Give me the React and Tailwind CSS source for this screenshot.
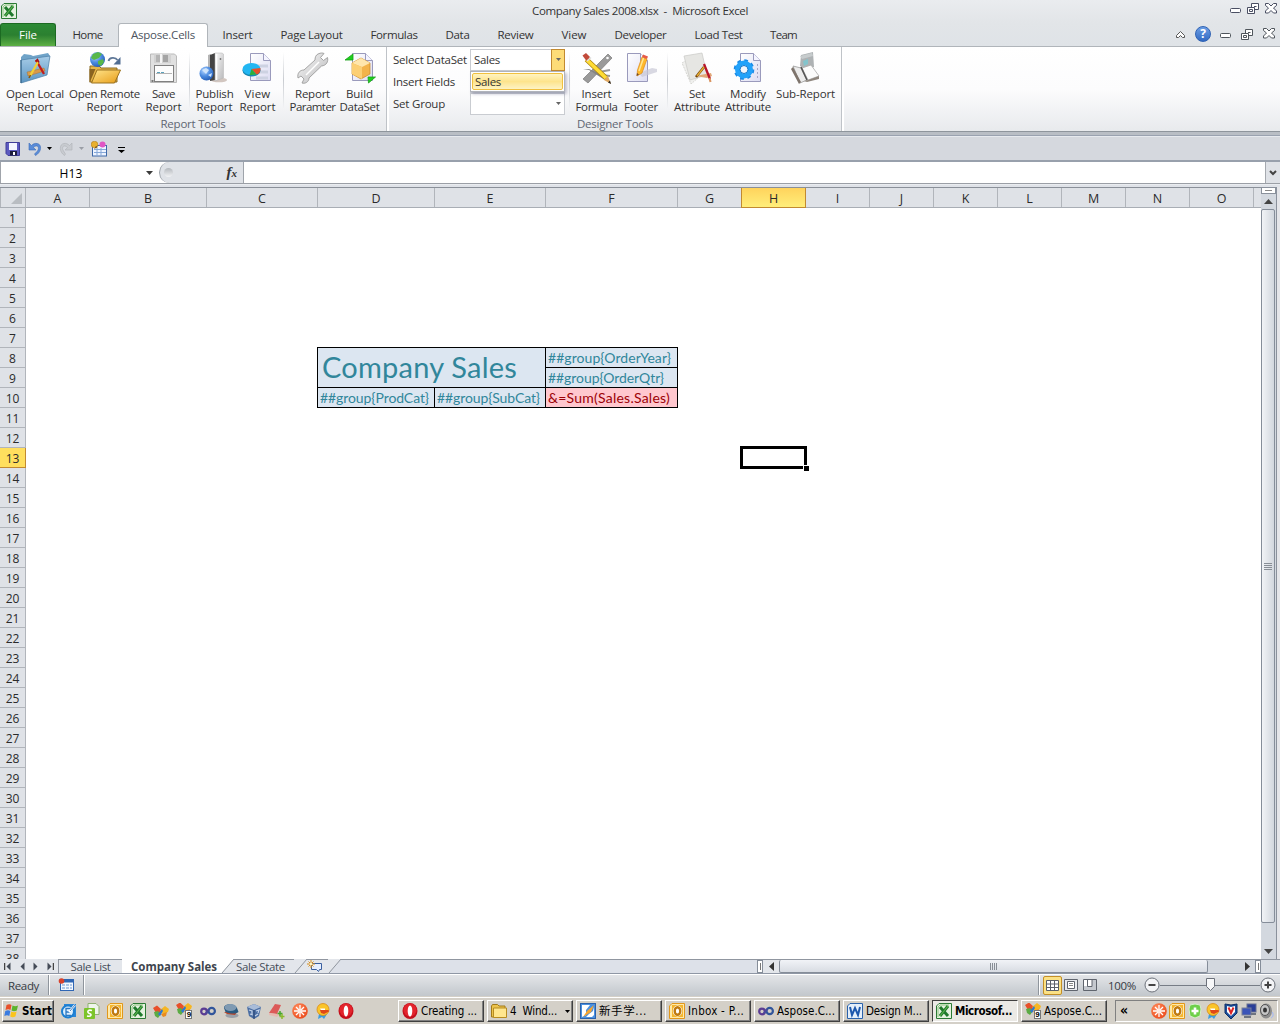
import React, { useLayoutEffect, useRef, useState } from "react";

/* Single-line text whose tracking is adjusted so that it fills w pixels. */
function T({ w, className = "", children }) {
  const ref = useRef(null);
  const [ls, setLs] = useState(null);
  useLayoutEffect(() => {
    if (!w || ls !== null) return;
    const natural = ref.current.getBoundingClientRect().width;
    setLs((w - natural) / String(children).length);
  }, [w, ls, children]);
  return (
    <span ref={ref} className={`inline-block whitespace-pre ${className}`} style={ls === null ? undefined : { letterSpacing: `${ls}px` }}>
      {children}
    </span>
  );
}

const Svg = ({ s = 16, children, className = "" }) => (
  <svg width={s} height={s} viewBox={`0 0 ${s} ${s}`} className={`block shrink-0 ${className}`}>{children}</svg>
);

/* ---------- shared gradients ---------- */
const Defs = () => (
  <svg width="0" height="0" className="absolute">
    <defs>
      <linearGradient id="blueF" x1="0" y1="0" x2="0" y2="1"><stop offset="0" stopColor="#a8cde8" /><stop offset="1" stopColor="#5b95c2" /></linearGradient>
      <linearGradient id="yel" x1="0" y1="0" x2="1" y2="1"><stop offset="0" stopColor="#ffe58c" /><stop offset="1" stopColor="#e89d18" /></linearGradient>
      <linearGradient id="gry" x1="0" y1="0" x2="1" y2="1"><stop offset="0" stopColor="#fafafa" /><stop offset="1" stopColor="#b8b8ba" /></linearGradient>
      <linearGradient id="page" x1="0" y1="0" x2="1" y2="1"><stop offset="0" stopColor="#ffffff" /><stop offset="1" stopColor="#dcdcf2" /></linearGradient>
      <radialGradient id="globe" cx="0.35" cy="0.3" r="0.8"><stop offset="0" stopColor="#b5d6ff" /><stop offset="0.5" stopColor="#4c8be0" /><stop offset="1" stopColor="#1f56ae" /></radialGradient>
      <radialGradient id="redg" cx="0.35" cy="0.3" r="0.8"><stop offset="0" stopColor="#ff8a5a" /><stop offset="1" stopColor="#ea4a1c" /></radialGradient>
    </defs>
  </svg>
);

/* ---------- ribbon icons, 32px ---------- */
const Page = ({ x = 8, y = 2, w = 20, h = 27 }) => (
  <g>
    <path d={`M${x} ${y}h${w - 7}l7 7v${h - 7}h-${w}z`} fill="url(#page)" stroke="#9a9abc" />
    <path d={`M${x + w - 7} ${y}v7h7`} fill="#f4f4ff" stroke="#9a9abc" />
  </g>
);

const LocalFolder = () => (
  <Svg s={32}>
    <path d="M2 5l3-3 7 1 2 1 15-3 2 3-1 4H2z" fill="#6fa3c8" />
    <path d="M2 8l29-4-3 19L2 31z" fill="url(#blueF)" stroke="#4a7ea6" strokeWidth="0.7" />
    <path d="M2 8v23" stroke="#35658a" strokeWidth="1.2" />
    <path d="M8 20l17-4 1 3-17 5z" fill="#d99a4a" stroke="#a06a28" strokeWidth="0.4" />
    <path d="M17 8l8 14" stroke="#c21c1c" strokeWidth="2.3" />
    <path d="M19 10l-8 14" stroke="#f2cf38" strokeWidth="2.3" />
    <path d="M16.500 9.500l2-2 1.500 3" stroke="#a11" strokeWidth="1.500" fill="none" />
    <path d="M11.500 23l-1.500 3" stroke="#8a560e" strokeWidth="1.500" />
  </Svg>
);
const RemoteFolder = () => (
  <Svg s={32}>
    <path d="M1 14h9l2 2h16v14H1z" fill="#e6b648" stroke="#8a6a24" />
    <path d="M0.500 31V17h6z" fill="#8a6420" />
    <path d="M8 18h23.500l-6 13H2.500z" fill="url(#yel)" stroke="#9a7220" />
    <circle cx="8.500" cy="7.500" r="7.500" fill="url(#globe)" />
    <path d="M4 2l5-2 4 2-3 4-5 2-3-2zM9 9l5-2 1 3-3 4-3-2z" fill="#58b84a" />
    <path d="M19.500 9c1-4 7-4 9-1" stroke="#5f7898" strokeWidth="1.800" fill="none" />
    <path d="M31.500 5v7.500h-7z" fill="#506d92" />
  </Svg>
);
const Floppy = () => (
  <Svg s={32}>
    <path d="M2.500 2h24l2 2v26.500h-26z" fill="#e0e0e0" stroke="#bababa" />
    <rect x="6" y="2" width="17" height="9" fill="#d2d2d2" />
    <rect x="8" y="3" width="4" height="7" fill="#b4b4b4" /><rect x="15" y="3" width="5" height="7" fill="#a4a4a4" /><rect x="12" y="2" width="2" height="9" fill="#f4f4f4" />
    <rect x="6.500" y="13.500" width="19" height="16" fill="#fcfcfc" stroke="#808080" />
    <path d="M9 20.500h8" stroke="#5aa0ba" strokeDasharray="3 1" /><path d="M8 21.500h16" stroke="#b4b4b4" />
    <rect x="3.500" y="28" width="2" height="2" fill="#777" />
  </Svg>
);
const Publish = () => (
  <Svg s={32}>
    <ellipse cx="20" cy="28" rx="8" ry="2.300" fill="#d2c6c0" />
    <path d="M9 3l3-1v25l-3 1z" fill="#b4b4b4" /><path d="M11 3l5-2v27l-5 1z" fill="#444" />
    <path d="M16 1h7l1.500 1v24l-8.500 3z" fill="url(#gry)" stroke="#b4b4b4" strokeWidth="0.500" /><path d="M17.500 2v26" stroke="#fff" strokeWidth="1.500" />
    <circle cx="21.500" cy="7" r="0.900" fill="#777" />
    <circle cx="7.500" cy="21.500" r="7" fill="url(#globe)" />
    <path d="M3 18l4-2 3 2-3 4zM9 23l4-2-1 4z" fill="#cfe4fb" />
  </Svg>
);
const ViewReport = () => (
  <Svg s={32}>
    <Page x={8.5} y={1.5} />
    <path d="M14 14h12M14 20h12M14 26h12" stroke="#cdd2e2" strokeWidth="3" />
    <ellipse cx="9.500" cy="18.500" rx="9" ry="6" fill="#1786b4" /><ellipse cx="9.500" cy="17" rx="9" ry="6" fill="#22b6f2" />
    <path d="M9.500 17l9-1c0 5-2 6-4 6.500z" fill="#e8502a" /><path d="M9.500 17l5 5.500-7 .8z" fill="#2fae3a" />
  </Svg>
);
const Wrench = () => (
  <Svg s={32}>
    <path d="M21 2c3-1.500 5-1 6-.5l-3.500 4 3 3 4-3c1 4-1 8-6 8.500L12 26c0 4-4 6-7 5l2-4-3-3-3 2c-1-5 2-8 6-8L18 8c0-3 1-5 3-6z" fill="url(#gry)" stroke="#9c9c9c" strokeWidth="0.900" />
    <path d="M22 10L9 23" stroke="#fff" strokeWidth="1.500" />
  </Svg>
);
const BuildDataset = () => (
  <Svg s={32}>
    <Page x={8.5} y={1.5} />
    <path d="M17 6l9 5v11l-9 5-9-5V11z" fill="#f3b34a" stroke="#c98a22" strokeWidth="0.700" />
    <path d="M17 6l9 5-8 4-10-4z" fill="#ffe6ac" /><path d="M8 11l10 4v12l-10-5z" fill="#fccf74" />
    <path d="M1 8l8-6v6z" fill="#1fd01f" stroke="#18a018" strokeWidth="0.800" /><path d="M24 25h7.500l-7 6z" fill="#1fd01f" stroke="#18a018" strokeWidth="0.800" />
  </Svg>
);
const InsertFormula = () => (
  <Svg s={32}>
    <path d="M27 2l4 4L7 31l-5-4z" fill="#9a9a9a" stroke="#7a7a7a" strokeWidth="0.700" />
    <path d="M2 17l6 1 16 10 5 2-5-6L8 17z" fill="#858585" /><path d="M18 20l11-2M20 23l9 1" stroke="#999" strokeWidth="2" />
    <circle cx="26.500" cy="6" r="1.300" fill="#fff" />
    <path d="M5.500 7.500L25 26" stroke="#a88010" strokeWidth="5" /><path d="M5.500 7.500L25 26" stroke="#ffdc34" strokeWidth="3.600" />
    <path d="M1.500 3.500L5 1l4 4-3.500 4z" fill="#c24a3a" /><path d="M6 9l4-3.500" stroke="#ddd" strokeWidth="1.500" />
    <path d="M23 28l4-4 3 8z" fill="#e0a860" /><path d="M30 32l-3-1.500 2-2z" fill="#222" />
  </Svg>
);
const SetFooter = () => (
  <Svg s={32}>
    <Page x={2.5} y={1.5} w={20} h={28} />
    <path d="M14 21l13-5 5 1v3l-15 5z" fill="#c8c8d6" opacity="0.700" />
    <path d="M17 5l5 2-5 14-5 3 .5-6z" fill="#ffb82c" stroke="#dc8a18" strokeWidth="0.700" /><path d="M18.500 6l-4.500 13" stroke="#ffe694" strokeWidth="1.500" />
    <path d="M17 5l1-2.500 5 2L22 7z" fill="#e65a48" /><path d="M11.500 24l.5-3 2 1.500z" fill="#6a4a30" />
  </Svg>
);
const SetAttribute = () => (
  <Svg s={32}>
    <path d="M1 11l8-5 8 20-7 6z" fill="#f0f0ee" stroke="#c8c8c4" strokeWidth="0.700" strokeDasharray="2 1" />
    <path d="M3 4l18-3 5 22-17 5z" fill="#e6e6e3" stroke="#c9c9c5" strokeWidth="0.700" />
    <path d="M14 24l16-3 1 3-5 2z" fill="#e2a878" /><path d="M23 12l6 15" stroke="#b8152a" strokeWidth="2.300" />
    <path d="M23 15l-8 10" stroke="#75430c" strokeWidth="2.600" /><path d="M23 15l-7 9" stroke="#e8b030" strokeWidth="1.300" />
    <path d="M28.500 26l1 4" stroke="#d9935e" strokeWidth="2" />
  </Svg>
);
const ModifyAttribute = () => (
  <Svg s={32}>
    <Page x={8.5} y={1.5} w={20} h={28} /><path d="M25.500 12v16" stroke="#a6a6c4" strokeDasharray="2 2" />
    <circle cx="12" cy="17.500" r="8.500" fill="none" stroke="#1a8ae6" strokeWidth="3.600" strokeDasharray="3.400 3.276" />
    <circle cx="12" cy="17.500" r="6.500" fill="none" stroke="#22a2fa" strokeWidth="5" />
    <circle cx="12" cy="17.500" r="4" fill="#f4f6fc" stroke="#0b74ca" />
  </Svg>
);
const SubReport = () => (
  <Svg s={32}>
    <path d="M11 3l12-3 1 15-9 2-5-3z" fill="#aeb2b4" /><path d="M10 4l12-3 1 3-11 3z" fill="#c7cccd" /><path d="M13 9l5-2v5l-4 2z" fill="#84c4cc" />
    <path d="M3 14l8 2 6 12-7 3z" fill="#ececec" stroke="#9a9a9a" strokeWidth="0.800" /><path d="M12 16l9-3 8 11-11 4z" fill="#fbfbfb" stroke="#aaa" strokeWidth="0.800" />
    <path d="M1 17l2-2 8 15-2 2z" fill="#7e746c" /><path d="M14 29l4-1 11-4v3l-12 3z" fill="#8e867e" /><path d="M11 15l6 13" stroke="#555" strokeWidth="1.600" />
  </Svg>
);

/* ---------- small icons ---------- */
const ExcelIcon = () => (
  <Svg><path d="M3 .5h12.500v15H.5V3z" fill="#e5f2df" stroke="#2b7a34" /><path d="M2 14V4l2-2h9" stroke="#8fc483" fill="none" />
    <path d="M4 4l8 9M12 3L4 13" stroke="#1f7a2c" strokeWidth="3" /><path d="M12 3L4 13" stroke="#5cb44c" strokeWidth="1.200" /></Svg>
);
const OperaIcon = () => (<Svg><ellipse cx="8" cy="8" rx="7.500" ry="8" fill="#c4101c" /><ellipse cx="8" cy="7" rx="6.500" ry="6.500" fill="#e3242c" /><ellipse cx="8" cy="8" rx="2.300" ry="5.500" fill="#fff" /></Svg>);
const OutlookIcon = () => (<Svg><path d="M3 .5h12.500v15H.5V3z" fill="#ffe9a8" stroke="#e2971a" /><rect x="3" y="2" width="11" height="12" fill="#f5b52c" /><ellipse cx="8.500" cy="8" rx="3.200" ry="4" fill="#fff" stroke="#fff" strokeWidth="3" /><ellipse cx="8.500" cy="8" rx="2.800" ry="3.800" fill="#fff" stroke="#c07a10" strokeWidth="2.400" /></Svg>);
const FolderIcon = () => (<Svg><path d="M.5 3l1-1.500h5L8 3h6v11H.5z" fill="#ecc34c" stroke="#a27a18" /><path d="M2.500 5h13v9.500h-13z" fill="#ffe68e" stroke="#b88c20" /></Svg>);
const NoteIcon = () => (<Svg><rect x=".5" y=".5" width="15" height="15" fill="#4a90e0" stroke="#2a62ac" /><path d="M2 2h8L6 7v5l-4 2z" fill="#fff" /><path d="M14 4v8l-2 2H6l3-3 4-3z" fill="#fff" /><path d="M3 14l4-6 7-6-3 7z" fill="#f7a52e" /></Svg>);
const VsIcon = () => (<Svg><circle cx="4" cy="8.500" r="2.800" fill="none" stroke="#5b3c93" strokeWidth="2.200" /><circle cx="11.700" cy="8" r="3.200" fill="none" stroke="#31559b" strokeWidth="2.200" /><path d="M6 10.500L9 6" stroke="#49499a" strokeWidth="2.200" /></Svg>);
const WordIcon = () => (<Svg><path d="M3 .5h12.500v15H.5V3z" fill="#e4effb" stroke="#2a62ac" /><path d="M3 4l2 8 3-7 3 7 2-8" fill="none" stroke="#1c57ad" strokeWidth="2" /></Svg>);
const Butterfly = () => (<g><path d="M0 5l4-2.500L9 7l-3 4-3-1z" fill="#e8502a" /><path d="M1 9l4-1 3 3-3 4-3-2z" fill="#5cab44" /><path d="M7 7l5-4 4 3-1 3-5 2z" fill="#f6b622" /><path d="M8 11l6-2-1 4-3 1z" fill="#e88c22" /><path d="M5 11l4-5 1 2-3 5z" fill="#2f78d0" /></g>);
const ButterflyIcon = () => <Svg><Butterfly /></Svg>;
const Butterfly9 = () => (
  <span className="relative block h-4 w-4 shrink-0"><Svg><g transform="translate(0 -3)"><Butterfly /></g></Svg>
    <span className="absolute right-0 bottom-0 h-[9px] w-[7px] border border-[#777] bg-white text-center font-['Liberation_Sans'] text-[8px] leading-[8px] font-bold text-black">9</span></span>
);
const OutlookExp = () => (<Svg><path d="M3 1h12v13H3z" fill="#2b86d8" /><circle cx="7" cy="8.500" r="6" fill="#dcefff" stroke="#1c7fd2" strokeWidth="2" /><path d="M10 5.500H5v7h5M5 9h4" stroke="#2b78c2" strokeWidth="1.300" fill="none" /><path d="M14 2L8 9" stroke="#fff" strokeWidth="2" /><path d="M14 2L9 8" stroke="#1560b0" strokeWidth="0.800" /></Svg>);
const SIcon = () => (<Svg><path d="M4 .5h8l3 3v8H4z" fill="#eef4ea" stroke="#8fb070" /><rect x="0" y="5" width="11" height="11" rx="1" fill="#7cc42a" /><path d="M8 7.500c-5-1.500-5 2.500-2.500 3s2 3.500-2.500 2.500" stroke="#fff" strokeWidth="1.600" fill="none" /></Svg>);
const StackIcon = () => (<Svg><ellipse cx="9" cy="12.500" rx="6.500" ry="2.500" fill="#9aa0a8" /><path d="M1 9l13 0-2 3-8-1z" fill="#b8462a" /><path d="M1 5c0-5 11-5 13 0l1.500 4c-3 2-7 2-13 0z" fill="#2a5a80" /><ellipse cx="7.500" cy="4.500" rx="6" ry="3.500" fill="#7f9ab2" /></Svg>);
const CubeIcon = () => (<Svg><path d="M1 4l7-3 7 3-2 9-5 3-5-3z" fill="#4c6fa4" /><path d="M1 4l7-3 7 3-7 3z" fill="#a9bcd8" /><path d="M3 7l3 1v3M10 8l3-1-1 3M4 11l3 1M9 13l3-2" stroke="#c5d4ea" fill="none" strokeWidth="1.200" /><path d="M8 7v9" stroke="#24406e" /></Svg>);
const BookIcon = () => (<Svg><path d="M6 1l6 1-4 9-8-1z" fill="#dc5a58" /><path d="M0 10l8 1 3-3v3l-3 3-8-2z" fill="#e8b8b0" /><path d="M11 8v5M8.500 10.500h5" stroke="#46a52c" strokeWidth="1.500" /><path d="M13 11v5M10.500 13.500h5" stroke="#8aba2c" strokeWidth="1.500" /></Svg>);
const BurstIcon = () => (<Svg><circle cx="8" cy="8" r="7.800" fill="url(#redg)" /><path d="M8 2v12M2 8h12M4 4l8 8M12 4l-8 8" stroke="#fff" strokeWidth="1.300" /><circle cx="8" cy="8" r="2" fill="#ffe9df" /></Svg>);
const BirdIcon = () => (<Svg><path d="M4 11l-1 5 4-2 2 2 3-5z" fill="#3c9ede" /><circle cx="8" cy="6.500" r="6" fill="#fbc52a" stroke="#d98a16" strokeWidth="0.800" /><path d="M5 7h8.500l.5 1.500L9 11l-3-1z" fill="#e04818" /><path d="M5 5.500h5V7H6z" fill="#fff" /></Svg>);
const WinFlag = () => (<Svg><path d="M2.500 2c2-1 3.500-1 5 0L6.500 7c-1.500-1-3-1-5 0z" fill="#e8502a" /><path d="M8.500 2.500c2 1 3.500 1 5.500 0l-1.200 5c-2 1-3.500 1-5.300 0z" fill="#5cb42c" /><path d="M1.300 8c2-1 3.500-1 5 0l-1 5c-1.500-1-3-1-5 0z" fill="#3a7be0" /><path d="M7.300 8.500c2 1 3.500 1 5.300 0l-1.200 5c-2 1-3.500 1-5.200 0z" fill="#fbc41c" /></Svg>);
const GreenCross = () => (<Svg><path d="M3 2l5-1 5 1 1 4-1 7-5 2-5-2-1-7z" fill="#6ed04a" stroke="#d5ecca" /><path d="M8 4.500v7M4.500 8h7" stroke="#fff" strokeWidth="2.600" /></Svg>);
const Shield = () => (<Svg><path d="M2 1l6 1 6-1v9l-6 6-6-6z" fill="#1d4f9c" stroke="#0e2f66" /><path d="M4 3l4 1 4-1v6l-4 4-4-4z" fill="#fff" /><path d="M5.500 4.500L8 10l2.500-5.500" stroke="#d22" strokeWidth="2" fill="none" /></Svg>);
const NetIcon = () => (<Svg><rect x="6" y="1" width="9" height="8" fill="#2b3f98" stroke="#666f90" /><rect x="1" y="5" width="9" height="7" fill="#3c55b8" stroke="#777f98" /><path d="M3 14h7M10 11h5" stroke="#6e7480" strokeWidth="2" /></Svg>);
const Speaker = () => (<Svg><ellipse cx="7" cy="8" rx="6" ry="7.500" fill="#8c8c8c" /><ellipse cx="6" cy="7" rx="4.500" ry="5.500" fill="#c5c5c5" stroke="#555" /><ellipse cx="6" cy="7" rx="2" ry="2.500" fill="#333" /><path d="M13 9c2 2 1 5-1 6" stroke="#9ab4ff" fill="none" /></Svg>);

const Min = ({ c }) => (<svg width="11" height="5" className="block"><rect x=".5" y=".5" width="10" height="4" rx="1" fill="#fff" stroke={c} /></svg>);
const Restore = ({ c }) => (<svg width="12" height="12" className="block"><path d="M4.500.5h7v6h-7z" fill="#fff" stroke={c} /><path d="M7 3.500h2.500" stroke={c} /><path d="M.5 4.500h7v6h-7z" fill="#fff" stroke={c} /><path d="M2.500 6.500h3v2h-3z" fill="#fff" stroke={c} /></svg>);
const Close = ({ c }) => (<svg width="12" height="11" className="block"><path d="M.5.5h3L6 3l2.500-2.500h3v2L8.500 5l3 3v2h-3L6 7.500 3.500 10h-3V8l3-3-3-2.500z" fill="#fff" stroke={c} /></svg>);

const Tri = ({ c = "#000", className = "" }) => (<svg width="5" height="3" className={`block shrink-0 ${className}`}><path d="M0 0h5L2.500 3z" fill={c} /></svg>);

/* ---------- title bar and tabs ---------- */
function TitleBar() {
  return (
    <div className="flex h-[23px] items-center bg-linear-to-b from-[#eaecef] to-[#e2e5e8] text-[11.5px] text-[#333]">
      <div className="ml-[1px] w-[531px]"><ExcelIcon /></div>
      <T w={216} className="-mt-px">{"Company Sales 2008.xlsx  -  Microsoft Excel"}</T>
      <div className="ml-auto flex items-center gap-[6px] pr-[3px] pb-[5px]">
        <div className="pt-[4px]"><Min c="#4a4f63" /></div><Restore c="#4a4f63" /><Close c="#4a4f63" />
      </div>
    </div>
  );
}

const TABS = [
  ["Home", "w-[62px]", 30], ["Aspose.Cells", "w-[90px]", 64], ["Insert", "w-[58px]", 30], ["Page Layout", "w-[90px]", 62],
  ["Formulas", "w-[75px]", 47], ["Data", "w-[52px]", 24], ["Review", "w-[64px]", 36], ["View", "w-[53px]", 25],
  ["Developer", "w-[80px]", 52], ["Load Test", "w-[76px]", 48], ["Team", "w-[54px]", 27],
];

function TabBar() {
  return (
    <div className="flex h-6 border-b border-[#b0b5ba] bg-linear-to-b from-[#e2e5e8] to-[#dfe3e7] text-[11.5px] text-[#333]">
      <div className="flex w-14 items-center justify-center rounded-t-[3px] border border-b-0 border-[#1c6a22] bg-linear-to-b from-[#2c8a35] via-[#2b8030] to-[#5db045] pb-px text-white"><T w={18}>File</T></div>
      {TABS.map(([t, cls, w]) => (
        <div key={t} className={`flex items-center justify-center ${cls} ${t === "Aspose.Cells" ? "-mb-px rounded-t-[3px] border border-b-0 border-[#b0b5ba] bg-white pb-[2px] text-[#4d545e]" : "pl-px"}`}><T w={w}>{t}</T></div>
      ))}
      <div className="ml-auto flex items-center pr-[5px]">
        <svg width="9" height="7" className="mr-[10px]"><path d="M.5 4.500l4-4 4 4v2h-2l-2-2-2 2h-2z" fill="#fff" stroke="#555" /></svg>
        <div className="mr-[9px] flex h-4 w-4 items-center justify-center rounded-full border border-[#2f62b4] bg-linear-to-b from-[#6c9ee4] to-[#3269c2] text-[12px] leading-none font-bold text-white">?</div>
        <div className="mr-[10px] pt-[3px]"><Min c="#4f555b" /></div><div className="mr-[10px] pt-px"><Restore c="#4f555b" /></div><div className="pb-[1px]"><Close c="#4f555b" /></div>
      </div>
    </div>
  );
}

/* ---------- ribbon ---------- */
function Big({ icon, cls, lines }) {
  return (
    <div className={`flex flex-col items-center ${cls}`}>
      <div className="h-[36px]">{icon}</div>
      {lines.map(([t, w]) => (<T key={t} w={w} className="h-[13px] leading-[12px]">{t}</T>))}
    </div>
  );
}
const Sep = ({ cls }) => <div className={`h-14 w-px bg-linear-to-b from-white via-[#c9ccd1] to-[#f2f3f5] ${cls}`} />;
const GroupEdge = () => <div className="h-full w-[3px] border-x border-l-[#bfc3c8] border-r-white bg-white" />;

function Field({ label, w, value, hot }) {
  return (
    <div className="flex h-[22px] items-center">
      <div className="w-[77px] pb-px"><T w={w}>{label}</T></div>
      <div className="flex h-[22px] w-[95px] items-center border border-[#c9ccd1] bg-white pl-[3px]">
        {value && <T w={26} className="-mt-px">{value}</T>}
        <div className={hot ? "-mr-px ml-auto flex h-[22px] w-[14px] items-center justify-center border border-[#c28a30] bg-[#fddc78]" : "-mr-px ml-auto flex h-[22px] w-[14px] items-center justify-center"}><Tri c="#666" /></div>
      </div>
    </div>
  );
}

function Ribbon() {
  return (
    <div className="flex h-[86px] border-b border-[#8e959c] bg-linear-to-b from-white via-[#fcfcfd] to-[#e8eaed] text-[11.5px] text-[#333]">
      <div className="flex w-[386px] flex-col">
        <div className="flex h-[71px] pt-[5px]">
          <Big cls="ml-[3px] w-16" icon={<LocalFolder />} lines={[["Open Local", 58], ["Report", 36]]} />
          <Big cls="w-[75px]" icon={<RemoteFolder />} lines={[["Open Remote", 71], ["Report", 36]]} />
          <Big cls="w-[43px]" icon={<Floppy />} lines={[["Save", 23], ["Report", 36]]} />
          <Sep cls="ml-[4px]" />
          <Big cls="ml-[3px] w-[43px]" icon={<Publish />} lines={[["Publish", 38], ["Report", 36]]} />
          <Big cls="w-[43px]" icon={<ViewReport />} lines={[["View", 26], ["Report", 36]]} />
          <Sep cls="ml-[4px]" />
          <Big cls="ml-[3px] w-[51px]" icon={<Wrench />} lines={[["Report", 35], ["Paramter", 46]]} />
          <Big cls="w-[43px]" icon={<BuildDataset />} lines={[["Build", 27], ["DataSet", 40]]} />
        </div>
        <div className="flex h-[13px] items-center justify-center text-[#606672]"><T w={65} className="-mt-px">Report Tools</T></div>
      </div>
      <GroupEdge />
      <div className="flex w-[452px] flex-col">
        <div className="flex h-[71px]">
          <div className="relative mt-[2px] ml-[4px] w-[172px]">
            <Field label="Select DataSet" w={74} value="Sales" hot />
            <Field label="Insert Fields" w={62} />
            <Field label="Set Group" w={52} />
            <div className="absolute top-[22px] left-[77px] flex h-[21px] w-[95px] border border-[#b0b3bb] bg-white p-px shadow-[2px_2px_3px_rgba(80,80,120,0.35)]">
              <div className="flex grow items-center rounded-[2px] border border-[#f0c040] bg-linear-to-b from-[#fff3c0] via-[#fde48c] to-[#fdf3c4] pl-[2px]"><T w={26}>Sales</T></div>
            </div>
          </div>
          <Sep cls="mt-[5px] ml-[4px]" />
          <div className="flex pt-[5px]">
            <Big cls="ml-[3px] w-[47px]" icon={<InsertFormula />} lines={[["Insert", 30], ["Formula", 42]]} />
            <Big cls="w-[42px]" icon={<SetFooter />} lines={[["Set", 16], ["Footer", 34]]} />
            <Sep cls="ml-[5px]" />
            <Big cls="ml-[4px] w-[50px]" icon={<SetAttribute />} lines={[["Set", 16], ["Attribute", 46]]} />
            <Big cls="w-[52px]" icon={<ModifyAttribute />} lines={[["Modify", 36], ["Attribute", 46]]} />
            <Big cls="w-[63px]" icon={<SubReport />} lines={[["Sub-Report", 59]]} />
          </div>
        </div>
        <div className="flex h-[13px] items-center justify-center text-[#606672]"><T w={76} className="-mt-px">Designer Tools</T></div>
      </div>
      <GroupEdge />
    </div>
  );
}

/* ---------- quick access and formula bar ---------- */
function QuickAccess() {
  return (
    <div className="flex h-[30px] items-center border-t-[3px] border-b-2 border-t-[#b9bec5] border-b-[#98a0ac] bg-[#d5d8de] pt-[2px] shadow-[inset_0_1px_0_#9aa2b0,inset_0_2px_0_#e6e9ee]">
      <Svg className="ml-[5px]"><path d="M1 1.500h13.500v13H3l-2-2z" fill="#5c5ac0" stroke="#403e98" /><rect x="4" y="2" width="8" height="7" fill="#f4f6ff" /><rect x="5" y="10" width="7" height="4.500" fill="#1c1c3c" /><rect x="8" y="11" width="2" height="3" fill="#fff" /></Svg>
      <Svg className="ml-[7px]"><path d="M1 2v7h7L5.500 6.500C9 3 12 6 9.500 10l-3 3 1 1.500C14 11 14 3 9 2.500 7 2 5 3 3.500 4.500z" fill="#5a8cd8" stroke="#3e6db8" strokeWidth="0.600" /></Svg>
      <Tri className="ml-[3px]" />
      <Svg className="ml-[7px]"><path d="M13 2v7H6l2.500-2.500C5 3 2 6 4.500 10l2 3-1 1.500C0 11 0 3 5 2.500c2-.5 4 .5 5.500 2z" fill="#c8cbd0" stroke="#aeb1b7" strokeWidth="0.600" /></Svg>
      <Tri c="#9a9ea6" className="ml-[4px]" />
      <Svg className="ml-[7px]"><rect x="1.500" y="4.500" width="14" height="10.500" fill="#eef4ff" stroke="#3e69a8" /><path d="M3 8.500h12M3 11.500h12M6 7v8M10 7v8" stroke="#86a8d8" /><circle cx="3.500" cy="3.500" r="3.300" fill="#e8b030" stroke="#a87412" strokeWidth="0.500" /><circle cx="11.500" cy="3.500" r="3" fill="#e056c4" /><path d="M3 8l2-3 2 1z" fill="#7c541a" /></Svg>
      <svg width="7" height="6" className="mt-[2px] ml-[11px]"><path d="M0 0h7v1H0zM0 3h7L3.500 6z" fill="#000" /></svg>
    </div>
  );
}

function FormulaBar() {
  return (
    <div className="h-[25px] bg-[#e9ecf0]">
      <div className="flex h-[22px] border-b border-[#9b9fa6] bg-white text-[12px] text-black">
        <div className="flex w-[159px] items-center border-l border-[#a0a4ab]">
          <div className="w-[140px] pt-[2px] text-center"><T w={23}>H13</T></div>
          <svg width="7" height="4" className="mt-px ml-[5px]"><path d="M0 0h7L3.500 4z" fill="#3b3b3b" /></svg>
        </div>
        <div className="flex w-[85px] items-center rounded-l-full border-r border-l border-[#9fa4ab] bg-[#dfe2e7]">
          <div className="ml-[4px] h-[9px] w-[9px] rounded-full bg-linear-to-b from-[#b4b8bd] to-[#f2f3f5]" />
          <span className="ml-auto pr-[6px] font-['Liberation_Serif'] text-[15px] leading-none font-bold text-[#333] italic">f<span className="text-[11px]">x</span></span>
        </div>
        <div className="ml-auto flex w-[15px] items-center justify-center border-l border-[#a5a9af] bg-[#dfe2e7]"><svg width="8" height="6"><path d="M1 1l3 3 3-3" fill="none" stroke="#444" strokeWidth="2" /></svg></div>
      </div>
      <div className="mt-[1px] h-[2px] bg-[#dfe2e8]" />
    </div>
  );
}

/* ---------- worksheet ---------- */
const COLS = [
  ["A", "w-16"], ["B", "w-[117px]"], ["C", "w-[111px]"], ["D", "w-[117px]"], ["E", "w-[111px]"], ["F", "w-[132px]"], ["G", "w-16"], ["H", "w-16"],
  ["I", "w-16"], ["J", "w-16"], ["K", "w-16"], ["L", "w-16"], ["M", "w-16"], ["N", "w-16"], ["O", "w-16"],
];

function Sheet() {
  return (
    <div className="flex h-[772px] bg-white">
      <div className="w-[1261px]">
        <div className="flex h-[21px] border-t border-b border-t-[#8a9099] border-b-[#a9aeb5] bg-[#dfe2e7] text-[12.5px] text-[#2b2b2b]">
          <div className="flex w-[26px] items-end justify-end border-r border-l border-[#b1b5bb] pr-[3px] pb-[3px]"><svg width="11" height="11"><path d="M11 0v11H0z" fill="#b9bdc2" /></svg></div>
          {COLS.map(([c, cls]) => (
            <div key={c} className={`flex items-center justify-center pt-[3px] leading-[16px] ${c === "H" ? "-mb-px -ml-px w-[65px] border border-t-0 border-[#c28a30] bg-linear-to-b from-[#ffd35c] to-[#ffee7a]" : `${cls} border-r border-[#b1b5bb]`}`}>{c}</div>
          ))}
        </div>
        <div className="flex h-[751px] overflow-hidden">
          <div className="w-[26px] shrink-0 text-[12px] text-[#2b2b2b]">
            {Array.from({ length: 38 }, (_, i) => (
              <div key={i} className={`flex h-5 items-center justify-center border-r border-b ${i === 12 ? "border-[#c28a30] bg-[#ffdf5e]" : "border-[#b1b5bb] bg-[#dfe2e7]"}`}><span className="pt-[3px] leading-none">{i + 1}</span></div>
            ))}
          </div>
          <div className="relative grow">
            <div className="mt-[139px] ml-[291px] grid w-[361px] grid-cols-[116px_110px_131px] grid-rows-[19px_19px_19px] gap-px border border-black bg-black font-['Lato'] text-[14px] leading-[20px] text-[#31869b]">
              <div className="col-span-2 row-span-2 flex items-center bg-[#dce6f1] pb-px pl-[4px] text-[29px]"><T w={195}>Company Sales</T></div>
              <div className="bg-[#dce6f1] pl-[2px]"><T w={123}>{"##group{OrderYear}"}</T></div>
              <div className="bg-[#dce6f1] pl-[2px]"><T w={116}>{"##group{OrderQtr}"}</T></div>
              <div className="bg-[#dce6f1] pl-[2px]"><T w={109}>{"##group{ProdCat}"}</T></div>
              <div className="bg-[#dce6f1] pl-[2px]"><T w={103}>{"##group{SubCat}"}</T></div>
              <div className="bg-[#ffc7ce] pl-[2px] text-[#9c0006]"><T w={122}>{"&=Sum(Sales.Sales)"}</T></div>
            </div>
            <div className="absolute top-[238px] left-[714px] h-[23px] w-[67px] border-[3px] border-black">
              <div className="absolute -right-[5px] -bottom-[5px] h-[6px] w-[6px] border-t border-l border-white bg-black" />
            </div>
          </div>
        </div>
      </div>
      <div className="flex w-4 flex-col items-center border-r border-[#8a919c] bg-[#d3d8df]">
        <div className="flex h-[7px] w-[15px] items-center justify-center border border-[#8a919c] bg-white"><div className="h-px w-[7px] bg-[#888]" /></div>
        <div className="flex h-[15px] items-center justify-center"><svg width="9" height="5"><path d="M0 5l4.500-5L9 5z" fill="#444" /></svg></div>
        <div className="flex h-[714px] w-[14px] flex-col items-center justify-center gap-px self-start rounded-[2px] border border-[#858d99] bg-linear-to-r from-[#f1f3f6] to-[#d2d7de]">
          {[0, 1, 2, 3].map((i) => <div key={i} className="h-px w-2 bg-[#888e96]" />)}
        </div>
        <div className="flex grow items-center pt-[20px]"><svg width="9" height="5"><path d="M0 0h9L4.500 5z" fill="#444" /></svg></div>
      </div>
      <div className="w-[3px] bg-[#e4e5e9]" />
    </div>
  );
}

const Slash = ({ l, r }) => (
  <svg width="13" height="14" className="block shrink-0"><path d="M0 0h13L1 14H0z" fill={l} /><path d="M13 0v14H1z" fill={r} /><path d="M13 0L1 14" stroke="#8f959e" /></svg>
);
const Nav = ({ flip, bar }) => (
  <svg width="8" height="9" className={flip ? "-scale-x-100" : ""}>{bar && <path d="M.5 1v7" stroke="#444" strokeWidth="1.500" />}<path d="M6.500 0.500v8l-4-4z" fill="#444b57" /></svg>
);

function SheetTabs() {
  return (
    <div className="flex h-[15px] border-b border-[#8f97a5] bg-[#dde1e9] text-[11.5px] leading-[14px] text-[#434b58]">
      <div className="flex w-[58px] items-center justify-between border-t border-[#e5e8ed] bg-[#e3e6eb] px-[4px]"><Nav bar /><Nav /><Nav flip /><Nav flip bar /></div>
      <div className="flex w-[64px] items-center justify-center border-t border-l border-[#9096a0] bg-[#e3e6eb] pt-px"><T w={40}>Sale List</T></div>
      <div className="flex w-[99px] items-center justify-center bg-white pt-[2px] pl-[5px] font-bold text-[#40454e]"><T w={86}>Company Sales</T></div>
      <Slash l="#fff" r="#e3e6eb" />
      <div className="flex w-[60px] items-center border-t border-[#9096a0] bg-[#e3e6eb] pt-px pl-[2px]"><T w={49}>Sale State</T></div>
      <Slash l="#e3e6eb" r="#e3e6eb" />
      <div className="flex w-[21px] items-center border-t border-[#9096a0] bg-[#e3e6eb]">
        <svg width="16" height="13"><path d="M4.500 3.500h10v6h-2l-1 2-2-2h-5z" fill="#e6efff" stroke="#3a5f9e" /><path d="M4 0v8M0 4h8M1.500 1.500l5 5M6.500 1.500l-5 5" stroke="#d8901c" /><circle cx="4" cy="4" r="1.300" fill="#fff3c0" /></svg>
      </div>
      <Slash l="#e3e6eb" r="#dde1e9" />
      <div className="flex grow items-stretch border-t border-[#9096a0]">
        <div className="ml-[416px] flex w-[6px] items-center justify-center border border-[#858d99] bg-white"><div className="h-[7px] w-px bg-[#777]" /></div>
        <div className="flex w-[16px] items-center justify-center bg-[#e3e6eb]"><svg width="5" height="9"><path d="M5 0v9L0 4.500z" fill="#333" /></svg></div>
        <div className="flex w-[429px] items-center justify-center gap-px rounded-[2px] border-x border-b border-[#858d99] bg-linear-to-b from-[#f1f3f7] to-[#d8dce3]">
          {[0, 1, 2, 3].map((i) => <div key={i} className="h-[7px] w-px bg-[#888e96]" />)}
        </div>
        <div className="flex w-[47px] items-center justify-end bg-[#d3d8df] pr-[5px]"><svg width="5" height="9"><path d="M0 0v9l5-4.500z" fill="#333" /></svg></div>
        <div className="flex w-[6px] items-center justify-center border border-[#858d99] bg-white"><div className="h-[7px] w-px bg-[#777]" /></div>
        <div className="grow bg-[#d9dde3]" />
      </div>
    </div>
  );
}

function StatusBar() {
  const div = <div className="h-[20px] w-[2px] border-l border-[#8f959c] bg-white" />;
  return (
    <div className="flex h-[22px] items-center border-t border-white bg-linear-to-b from-[#e3e5e8] to-[#c2c7cc] pb-px text-[11.5px] text-[#373b43]">
      <div className="w-[48px] pl-[8px]"><T w={31}>Ready</T></div>{div}
      <div className="flex w-[33px] justify-center pr-[2px]"><Svg><rect x="2.500" y="2.500" width="13" height="11" fill="#f2f7ff" stroke="#2f66b4" /><path d="M2 4h14" stroke="#2f66b4" strokeWidth="3" /><path d="M4 8h10M4 11h10" stroke="#6d97d0" strokeDasharray="3 1" /><circle cx="3.500" cy="4" r="2.800" fill="#d8422c" /></Svg></div>{div}
      <div className="ml-auto flex items-center">
        {div}
        <div className="ml-[3px] flex h-[19px] w-[19px] items-center justify-center rounded-[2px] border border-[#c48f26] bg-[#fbe185]"><svg width="13" height="11"><path d="M.5.5h12v10H.5zM.5 4h12M.5 7.500h12M4.500.5v10M8.500.5v10" fill="#fff" stroke="#5a5f69" /></svg></div>
        <svg width="14" height="12" className="ml-[2px]"><path d="M.5.5h13v11H.5z" fill="#e8eaee" stroke="#60656e" /><path d="M3.500 2.500h7v7h-7z" fill="#fff" stroke="#60656e" /><path d="M5 4.500h4M5 6.500h4" stroke="#888" /></svg>
        <svg width="14" height="12" className="ml-[5px]"><path d="M.5.5h13v11H.5z" fill="#c5c9cf" stroke="#60656e" /><path d="M1 1h3v6H1zM5 1h4v6H5z" fill="#fff" /><path d="M4.500 0v7.500h4.500V0" stroke="#60656e" fill="none" /></svg>
        <T w={28} className="ml-[11px]">100%</T>
        <div className="ml-[8px] flex items-center">
          <Svg><circle cx="8" cy="8" r="7" fill="#f3f4f6" stroke="#6c717a" /><path d="M4.500 8h7" stroke="#444" strokeWidth="2" /></Svg>
          <div className="relative h-px w-[100px] bg-[#777d86]"><svg width="9" height="13" className="absolute -top-[7px] left-[46px]"><path d="M.5.5h8v8l-4 4-4-4z" fill="#f7f8f9" stroke="#6c717a" /></svg></div>
          <Svg><circle cx="8" cy="8" r="7" fill="#f3f4f6" stroke="#6c717a" /><path d="M4.500 8h7M8 4.500v7" stroke="#444" strokeWidth="2" /></Svg>
        </div>
        <div className="w-[4px]" />
      </div>
    </div>
  );
}

/* ---------- taskbar ---------- */
const QUICK = [OutlookExp, SIcon, OutlookIcon, ExcelIcon, ButterflyIcon, Butterfly9, VsIcon, StackIcon, CubeIcon, BookIcon, BurstIcon, BirdIcon, OperaIcon];
const TASKS = [
  [OperaIcon, "Creating ...", 56], [FolderIcon, "4  Wind...", 47, true], [NoteIcon, "新手学...", 48], [OutlookIcon, "Inbox - P...", 56],
  [VsIcon, "Aspose.C...", 58], [WordIcon, "Design M...", 56], [ExcelIcon, "Microsof...", 57], [Butterfly9, "Aspose.C...", 58],
];
const TRAY = [BurstIcon, OutlookIcon, GreenCross, BirdIcon, Shield, NetIcon, Speaker];

function Taskbar() {
  const raised = "border border-t-white border-l-white border-r-[#404040] border-b-[#404040] shadow-[inset_-1px_-1px_0_#808080]";
  return (
    <div className="flex h-[28px] items-center border-t border-[#d4d0c8] bg-[#d4d0c8] pt-px shadow-[inset_0_1px_0_#fff] font-['DejaVu_Sans_Condensed','DejaVu_Sans','Noto_Sans_CJK_SC',sans-serif] text-[11.5px] text-black">
      <div className={`ml-[2px] flex h-[22px] w-[52px] items-center pl-px ${raised}`}><WinFlag /><T w={30} className="mt-px ml-[2px] font-bold">Start</T></div>
      <div className="ml-[7px] flex gap-[7.1px]">{QUICK.map((I, i) => <I key={i} />)}</div>
      <div className="ml-auto flex gap-[3px]">
        {TASKS.map(([I, t, w, menu], i) => (
          <div key={i} className={`flex h-[22px] w-[86px] items-center pl-[3px] ${i === 6 ? "border border-t-[#404040] border-l-[#404040] border-r-white border-b-white bg-[#ebe9e5] font-bold" : raised}`}>
            <I /><T w={w} className="mt-px ml-[3px]">{t}</T>{menu && <Tri className="ml-[8px]" />}
          </div>
        ))}
      </div>
      <div className="mr-[2px] ml-[8px] flex h-[22px] w-[163px] items-center border border-t-[#808080] border-l-[#808080] border-r-white border-b-white pl-[4px]">
        <T w={9} className="mb-[2px] text-[14px] font-bold">«</T>
        <div className="ml-auto flex gap-[2px] pr-[2px]">{TRAY.map((I, i) => <I key={i} />)}</div>
      </div>
    </div>
  );
}

export default function App() {
  return (
    <div className="flex h-[1024px] w-[1280px] flex-col overflow-hidden bg-white font-['Open_Sans','Noto_Sans',sans-serif]">
      <Defs />
      <TitleBar />
      <TabBar />
      <Ribbon />
      <QuickAccess />
      <FormulaBar />
      <Sheet />
      <SheetTabs />
      <StatusBar />
      <Taskbar />
    </div>
  );
}
